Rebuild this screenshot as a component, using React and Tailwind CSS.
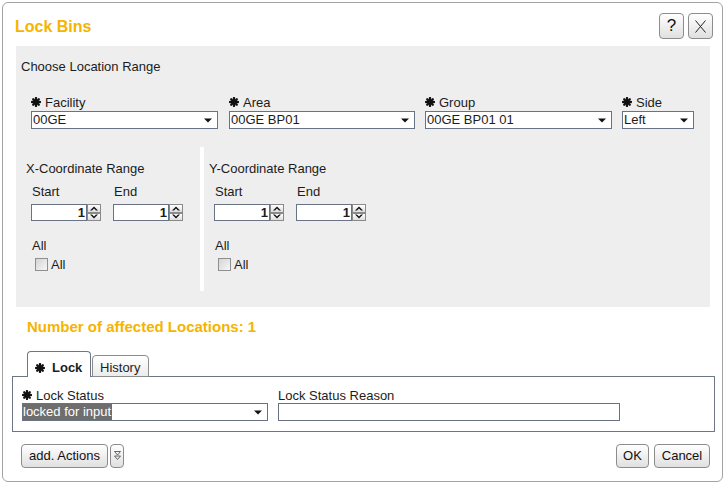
import React from "react";

const BORDER = "border-[#687386]";

const Star = () => (
  <svg width="10" height="10" viewBox="0 0 10 10" className="shrink-0">
    <g stroke="#111" strokeWidth="2.3" strokeLinecap="round">
      <line x1="5" y1="1" x2="5" y2="9" />
      <line x1="1" y1="5" x2="9" y2="5" />
      <line x1="2.2" y1="2.2" x2="7.8" y2="7.8" />
      <line x1="7.8" y1="2.2" x2="2.2" y2="7.8" />
    </g>
  </svg>
);

const Label = ({ children, required, className = "" }) => (
  <div className={`flex h-[16px] items-center text-[13px] leading-[16px] ${className}`}>
    {required && <Star />}
    <span className={required ? "ml-[4px] pt-[1px]" : "pt-[1px]"}>{children}</span>
  </div>
);

const Arrow = () => (
  <svg width="8" height="5" viewBox="0 0 8 5" className="mr-[5px] shrink-0">
    <path d="M0 0.5 H8 L4 4.5 Z" fill="#111" />
  </svg>
);

const Select = ({ width, value, highlight }) => (
  <div
    className={`flex h-[18px] items-center border ${BORDER} bg-white text-[13px] leading-[16px]`}
    style={{ width }}
  >
    <div className="flex h-full flex-1 items-center overflow-hidden">
      {highlight ? (
        <span className="flex h-full items-center bg-[#6e6e6e] pr-[1px] text-white">{value}</span>
      ) : (
        <span className="pl-[1px]">{value}</span>
      )}
    </div>
    <Arrow />
  </div>
);

const SpinHalf = ({ up }) => (
  <div className="flex flex-1 items-center justify-center border border-[#8a8a8a] bg-linear-to-b from-white to-[#dedede]">
    <svg width="8" height="5" viewBox="0 0 8 5">
      <path d={up ? "M0 4.5 L4 0.5 L8 4.5 L6 4.5 L4 2.5 L2 4.5 Z" : "M0 0.5 L4 4.5 L8 0.5 L6 0.5 L4 2.5 L2 0.5 Z"} fill="#111" />
    </svg>
  </div>
);

const Spinner = () => (
  <div className="flex h-[17px]">
    <div className={`w-[56px] border ${BORDER} bg-white pr-[1px] text-right text-[13px] font-bold leading-[15px]`}>
      1
    </div>
    <div className="flex w-[14px] flex-col">
      <SpinHalf up />
      <SpinHalf />
    </div>
  </div>
);

const Checkbox = () => (
  <div className="flex items-center pl-[3px]">
    <div className="h-[13px] w-[13px] border border-[#8f8f8f] bg-linear-to-br from-[#d4d4d4] to-[#f7f7f7]" />
    <span className="ml-[3px] text-[13px] leading-[15px]">All</span>
  </div>
);

const RangeBlock = ({ title, className }) => (
  <div className={`flex h-[144px] flex-col pt-[14px] ${className}`}>
    <div className="text-[13px] leading-[15px]">{title}</div>
    <div className="mt-[8px] flex gap-[12px] pl-[5px]">
      {["Start", "End"].map((l) => (
        <div key={l} className="flex flex-col">
          <div className="pl-[1px] text-[13px] leading-[15px]">{l}</div>
          <div className="mt-[5px]">
            <Spinner />
          </div>
        </div>
      ))}
    </div>
    <div className="mt-[17px] pl-[6px] text-[13px] leading-[15px]">All</div>
    <div className="mt-[4px] pl-[6px]">
      <Checkbox />
    </div>
  </div>
);

const Btn = ({ children, className = "" }) => (
  <div
    className={`flex h-[24px] items-center justify-center rounded-[4px] border border-[#8c8c8c] bg-linear-to-b from-white to-[#e0e0e0] text-[13px] text-[#111] ${className}`}
  >
    {children}
  </div>
);

export default function App() {
  return (
    <div className="h-[484px] w-[726px] overflow-hidden bg-white pl-[2px] pt-[2px] font-['Liberation_Sans',Arial,sans-serif] text-[#1c1c1c]">
      <div className="flex h-[480px] w-[721px] flex-col rounded-[6px] border border-[#a3a3a3] bg-white">
        {/* header */}
        <div className="flex h-[43px] items-start pl-[12px] pr-[9px]">
          <div className="mt-[15px] text-[16px] font-bold leading-[18px] text-[#f5b400]">Lock Bins</div>
          <div className="ml-auto mt-[10px] flex gap-[4px]">
            <Btn className="h-[26px] w-[25px] text-[17px]">?</Btn>
            <Btn className="h-[26px] w-[25px]">
              <svg width="11" height="13" viewBox="0 0 11 13">
                <path d="M0.5 0.5 L10.5 12.5 M10.5 0.5 L0.5 12.5" stroke="#222" strokeWidth="1" fill="none" />
              </svg>
            </Btn>
          </div>
        </div>

        {/* location range */}
        <div className="ml-[13px] mr-[12px] flex h-[261px] flex-col bg-[#eeeeee] pt-[13px]">
          <div className="pl-[5px] text-[13px] leading-[15px]">Choose Location Range</div>
          <div className="mt-[20px] flex gap-[10px] pl-[15px]">
            <div className="mr-[1px]">
              <Label required>Facility</Label>
              <div className="mt-[1px]">
                <Select width={187} value="00GE" />
              </div>
            </div>
            <div>
              <Label required>Area</Label>
              <div className="mt-[1px]">
                <Select width={186} value="00GE BP01" />
              </div>
            </div>
            <div>
              <Label required>Group</Label>
              <div className="mt-[1px]">
                <Select width={187} value="00GE BP01 01" />
              </div>
            </div>
            <div>
              <Label required>Side</Label>
              <div className="mt-[1px]">
                <Select width={72} value="Left" />
              </div>
            </div>
          </div>
          <div className="mt-[18px] flex">
            <RangeBlock title="X-Coordinate Range" className="w-[184px] pl-[10px]" />
            <div className="h-[144px] w-[4px] bg-white" />
            <RangeBlock title="Y-Coordinate Range" className="pl-[5px]" />
          </div>
        </div>

        <div className="ml-[24px] mt-[11px] text-[15px] font-bold leading-[18px] text-[#f5b400]">
          Number of affected Locations: 1
        </div>

        {/* tabs */}
        <div className="relative z-10 -mb-px ml-[9px] mt-[15px] flex items-end gap-[1px] pl-[15px]">
          <div className="flex h-[26px] w-[64px] items-start rounded-t-[4px] border border-b-0 border-[#6e7685] bg-white pl-[7px] pt-[8px]">
            <div className="flex h-[15px] items-center">
              <Star />
              <span className="ml-[7px] text-[13px] font-bold leading-[15px]">Lock</span>
            </div>
          </div>
          <div className="h-[22px] w-[57px] rounded-t-[4px] border border-[#8c8c8c] bg-linear-to-b from-white to-[#ececec] pl-[7px] pt-[4px] text-[13px] leading-[15px]">
            History
          </div>
        </div>
        <div className="ml-[9px] mr-[7px] flex h-[56px] gap-[10px] border border-[#6e7685] pl-[9px] pt-[10px]">
          <div>
            <Label required>Lock Status</Label>
            <Select width={246} value="locked for input" highlight />
          </div>
          <div>
            <Label>Lock Status Reason</Label>
            <div className={`h-[18px] w-[342px] border ${BORDER} bg-white`} />
          </div>
        </div>

        {/* footer */}
        <div className="ml-[18px] mr-[12px] mt-[12px] flex items-center">
          <Btn className="w-[87px]">add. Actions</Btn>
          <Btn className="ml-[2px] w-[14px]">
            <svg width="7" height="10" viewBox="0 0 7 10">
              <path d="M0.5 0.5 H6.5 L3.5 4 Z M0.5 5 H6.5 L3.5 8.5 Z" stroke="#444" strokeWidth="0.8" fill="none" />
            </svg>
          </Btn>
          <Btn className="ml-auto w-[33px]">OK</Btn>
          <Btn className="ml-[5px] w-[56px]">Cancel</Btn>
        </div>
      </div>
    </div>
  );
}
